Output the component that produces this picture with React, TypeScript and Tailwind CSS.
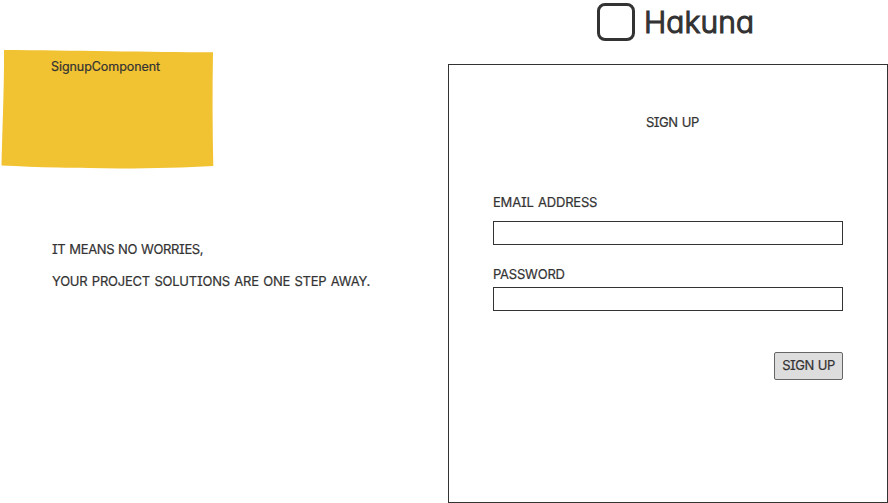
import type { ReactNode } from "react";

function Label({ children, className = "" }: { children: ReactNode; className?: string }) {
  return (
    <span
      className={`block whitespace-nowrap leading-4 [-webkit-text-stroke:0.2px_#333] ${className}`}
    >
      {children}
    </span>
  );
}

function StickyNote() {
  return (
    <div className="relative h-[122px] w-[216px]">
      <svg className="absolute inset-0" width="216" height="122" viewBox="0 0 216 122">
        <path
          d="M4 2 C70 2.3 150 4.2 213 4.3 C212.3 42 212.5 80 213.3 118 C155 121.7 65 120.8 1.5 117.6 C2.3 80 4.3 40 4 2Z"
          fill="#f1c232"
        />
      </svg>
      <Label className="relative pl-[51px] pt-[11px] text-[12.5px] tracking-[-0.06px]">SignupComponent</Label>
    </div>
  );
}

function Logo() {
  return (
    <header className="ml-[149px] flex h-16 items-start pt-[3px]">
      <div className="h-[38px] w-[38px] rounded-[8px] border-[3px] border-[#333]" />
      <h1 className="ml-[9px] whitespace-nowrap text-[30px] font-light leading-[38px] tracking-[0.1px] [-webkit-text-stroke:1.2px_#333] [stroke-linejoin:round]">
        Hakuna
      </h1>
    </header>
  );
}

function SignupForm() {
  return (
    <form className="h-[439px] w-[440px] border border-[#333] px-11 pt-[49px]">
      <Label className="pl-[153px] text-[13px] tracking-[-0.5px] [word-spacing:1px]">SIGN UP</Label>
      <Label className="mt-16 text-[13px] tracking-[-0.2px] [word-spacing:1px]">EMAIL ADDRESS</Label>
      <input className="mt-[11px] block h-6 w-[350px] border border-[#333] bg-white outline-none" />
      <Label className="mt-[21px] text-[13px] tracking-[-0.22px]">PASSWORD</Label>
      <input type="password" className="mt-[5px] block h-6 w-[350px] border border-[#333] bg-white outline-none" />
      <button
        type="button"
        className="ml-auto mt-[41px] flex h-7 w-[69px] items-center justify-center rounded-[2px] border border-[#666] bg-[#ddd] pb-0.5"
      >
        <Label className="text-[13px] tracking-[-0.5px] [word-spacing:1px]">SIGN UP</Label>
      </button>
    </form>
  );
}

export default function App() {
  return (
    <main className="flex h-[503px] w-[888px] overflow-hidden bg-white font-['Inter','Liberation_Sans',sans-serif] text-[#333] [font-feature-settings:'cv11','cv08']">
      <section className="w-[448px] pt-12">
        <StickyNote />
        <div className="mt-[71px] pl-[52px]">
          <Label className="text-[13px] tracking-[-0.36px] [word-spacing:0.6px]">IT MEANS NO WORRIES,</Label>
          <Label className="mt-4 text-[13px] tracking-[-0.23px] [word-spacing:1px]">YOUR PROJECT SOLUTIONS ARE ONE STEP AWAY.</Label>
        </div>
      </section>
      <section className="w-[440px]">
        <Logo />
        <SignupForm />
      </section>
    </main>
  );
}
